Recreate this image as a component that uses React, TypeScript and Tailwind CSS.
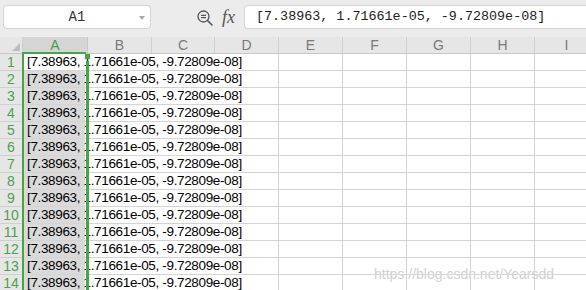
const value = '[7.38963, 1.71661e-05, -9.72809e-08]';

const rightCols = ['E', 'F', 'G', 'H', 'I'];

const headerCols = [
  { label: 'B', w: 'w-[64px]' },
  { label: 'C', w: 'w-[63px]' },
  { label: 'D', w: 'w-[64px]' },
  { label: 'E', w: 'w-[64px]' },
  { label: 'F', w: 'w-[64px]' },
  { label: 'G', w: 'w-[64px]' },
  { label: 'H', w: 'w-[64px]' },
  { label: 'I', w: 'w-[64px]' },
];

const rows = Array.from({ length: 14 }, (_, i) => i + 1);

function ZoomFormulaIcon() {
  return (
    <svg width="18" height="18" viewBox="0 0 18 18" fill="none" stroke="#555" strokeWidth="1.3">
      <circle cx="7.5" cy="7.5" r="5.5" />
      <path d="M5 6.3h5M5 8.7h5" />
      <path d="M11.5 11.5l4.5 4.5" strokeWidth="1.6" strokeLinecap="round" />
    </svg>
  );
}

function FormulaBar() {
  return (
    <div className="flex items-center h-[37px] bg-[#ececec] pl-[3px] pb-[3px]">
      <div className="relative flex items-center justify-center w-[148px] h-[24px] bg-white border border-[#d4d4d4] rounded-[4px]">
        <span className="text-[14px] text-[#333] font-['Liberation_Mono',monospace]">A1</span>
        <svg className="absolute right-[5px] top-[10px]" width="6" height="4" viewBox="0 0 6 4">
          <path d="M0 0H6L3 4Z" fill="#a8a8a8" />
        </svg>
      </div>
      <div className="ml-[45px] mt-[1px]">
        <ZoomFormulaIcon />
      </div>
      <span className="ml-[8px] text-[18px] italic text-[#555] font-['Liberation_Serif',serif] leading-none">
        fx
      </span>
      <div className="ml-[9px] flex-1 flex items-center h-[24px] bg-white border border-[#d4d4d4] border-r-0 rounded-l-[4px] pl-[11px]">
        <span className="text-[13.4px] text-[#222] font-['Liberation_Mono',monospace] whitespace-nowrap">{value}</span>
      </div>
    </div>
  );
}

function HeaderRow() {
  return (
    <div className="flex h-[17px] bg-[#e6e6e6] border-b border-[#c8c8c8] text-[14px] font-['Liberation_Sans',Arial,sans-serif] leading-[16px]">
      <div className="w-[23px] shrink-0 border-r border-[#d0d0d0] flex items-end justify-end pr-[2px] pb-[2px]">
        <svg width="8" height="8" viewBox="0 0 8 8">
          <path d="M8 0V8H0Z" fill="#bdbdbd" />
        </svg>
      </div>
      <div className="w-[65px] shrink-0 bg-[#d5d5d5] border-r border-[#c8c8c8] text-center text-[#46a046]">A</div>
      {headerCols.map(c => (
        <div key={c.label} className={`${c.w} shrink-0 border-r border-[#d0d0d0] text-center text-[#7a7a7a]`}>
          {c.label}
        </div>
      ))}
    </div>
  );
}

function DataRow({ n }: { n: number }) {
  const fill =
    n === 1 ? 'bg-white' : 'bg-[linear-gradient(to_right,#dadada_62px,#ffffff_62px)]';
  return (
    <div className="flex h-[17px] text-[13.5px] leading-[16px] font-['Liberation_Sans',Arial,sans-serif]">
      <div className="w-[23px] shrink-0 bg-[#e6e6e6] border-r border-b border-[#d0d0d0] text-center text-[14px] text-[#4ca24c]">
        {n}
      </div>
      <div className={`w-[256px] shrink-0 border-r border-b border-[#d4d4d4] pl-[4px] whitespace-nowrap tracking-[-0.35px] text-black ${fill}`}>
        {value}
      </div>
      {rightCols.map(c => (
        <div key={c} className="w-[64px] shrink-0 border-r border-b border-[#d4d4d4]" />
      ))}
    </div>
  );
}

export default function App() {
  return (
    <div className="relative w-[586px] h-[290px] overflow-hidden bg-white">
      <FormulaBar />
      <HeaderRow />
      {rows.map(n => (
        <DataRow key={n} n={n} />
      ))}

      {/* selection outline on column A */}
      <div className="absolute left-[22px] top-[52px] w-[64px] h-[2px] bg-[#46a546]" />
      <div className="absolute left-[22px] top-[52px] w-[2px] bottom-0 bg-[#46a546]" />
      <div className="absolute left-[85px] top-[54px] w-[5px] h-[5px] bg-[#46a546]" />
      <div className="absolute left-[86px] top-[61px] w-[3px] bottom-0 bg-[#46a546]" />

      <div className="absolute left-[374px] top-[264px] text-[14px] text-[#d2d2d2] font-['Liberation_Sans',Arial,sans-serif] whitespace-nowrap [text-shadow:0_0_1px_#fff]">
        https://blog.csdn.net/Yearsdd
      </div>
    </div>
  );
}
